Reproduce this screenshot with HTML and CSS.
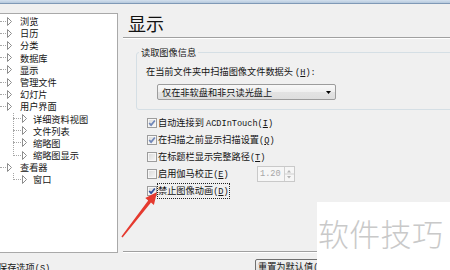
FILE: index.html
```html
<!DOCTYPE html>
<html>
<head>
	<meta charset="utf-8">
	<title>选项 - 显示</title>
	<link rel="stylesheet" href="styles.css">
</head>
<body>

	<svg class="defs">
		<symbol id="tri" viewBox="0 0 7 9"><path d="M1.5 0.5 L5.5 4.5 L1.5 8.5 Z" fill="#fff" stroke="#8c8c8c"/></symbol>
		<symbol id="tick" viewBox="0 0 8 8"><path d="M1.2 4 L3.1 6.1 L6.9 1.5" fill="none" stroke-width="1.7"/></symbol>
	</svg>

	<div class="frame-top"></div>

	<div class="dialog">
		<div class="tree">
			<div class="node"><i class="twig"></i><svg class="tri"><use href="#tri"/></svg><span>浏览</span></div>
			<div class="node"><i class="twig"></i><svg class="tri"><use href="#tri"/></svg><span>日历</span></div>
			<div class="node"><i class="twig"></i><svg class="tri"><use href="#tri"/></svg><span>分类</span></div>
			<div class="node"><i class="twig"></i><svg class="tri"><use href="#tri"/></svg><span>数据库</span></div>
			<div class="node"><i class="twig"></i><svg class="tri"><use href="#tri"/></svg><span class="sel">显示</span></div>
			<div class="node"><i class="twig"></i><svg class="tri"><use href="#tri"/></svg><span>管理文件</span></div>
			<div class="node"><i class="twig"></i><svg class="tri"><use href="#tri"/></svg><span>幻灯片</span></div>
			<div class="node"><i class="twig"></i><svg class="tri"><use href="#tri"/></svg><span>用户界面</span></div>
			<div class="children">
				<div class="node"><i class="twig"></i><svg class="tri"><use href="#tri"/></svg><span>详细资料视图</span></div>
				<div class="node"><i class="twig"></i><svg class="tri"><use href="#tri"/></svg><span>文件列表</span></div>
				<div class="node"><i class="twig"></i><svg class="tri"><use href="#tri"/></svg><span>缩略图</span></div>
				<div class="node"><i class="twig"></i><svg class="tri"><use href="#tri"/></svg><span>缩略图显示</span></div>
			</div>
			<div class="node"><i class="twig"></i><svg class="tri"><use href="#tri"/></svg><span>查看器</span></div>
			<div class="children">
				<div class="node"><i class="twig"></i><svg class="tri"><use href="#tri"/></svg><span>窗口</span></div>
			</div>
		</div>

		<div class="page">
			<h1 class="page-title">显示</h1>
			<div class="rule"></div>

			<fieldset class="group">
				<legend>读取图像信息</legend>
				<p class="group-label">在当前文件夹中扫描图像文件数据头 <span class="key">(<u>H</u>):</span></p>
				<div class="combo">
					<span>仅在非软盘和非只读光盘上</span>
					<svg class="combo-arrow" viewBox="0 0 5 3"><path d="M0 0 H5 L2.5 3 Z"/></svg>
				</div>
			</fieldset>

			<ul class="options">
				<li class="opt"><span class="cb"><svg class="tick"><use href="#tick"/></svg></span><span class="opt-text">自动连接到 <span class="key">ACDInTouch(<u>I</u>)</span></span></li>
				<li class="opt"><span class="cb"><svg class="tick"><use href="#tick"/></svg></span><span class="opt-text">在扫描之前显示扫描设置<span class="key">(<u>Q</u>)</span></span></li>
				<li class="opt"><span class="cb"></span><span class="opt-text">在标题栏显示完整路径<span class="key">(<u>T</u>)</span></span></li>
				<li class="opt">
					<span class="cb"></span><span class="opt-text gamma">启用伽马校正<span class="key">(<u>E</u>)</span></span>
					<span class="spin">
						<span class="spin-value">1.20</span>
						<svg class="spin-btns" viewBox="0 0 10 14"><path d="M0.5 0 V14 M0.5 7 H10" stroke="#d0d0d0" fill="none"/><path d="M5 3 L7 5.5 H3 Z M5 11.5 L7 9 H3 Z" fill="#b4b4b4"/></svg>
					</span>
				</li>
				<li class="opt"><span class="cb"><svg class="tick strong"><use href="#tick"/></svg></span><span class="opt-text focus">禁止图像动画<span class="key">(<u>D</u>)</span></span></li>
			</ul>

			<div class="rule rule-bottom"></div>
		</div>
	</div>

	<div class="footer">
		<span class="save">保存选项<span class="key">(<u>S</u>)</span></span>
		<button class="reset" type="button">重置为默认值<span class="key">(<u>D</u>)</span></button>
	</div>

	<div class="watermark">软件技巧</div>

	<svg class="callout" viewBox="0 0 450 270">
		<polygon points="121.4,236.5 148.2,200.4 145.3,198.1 157,192 153.9,204.9 151,202.6 122.6,237.5" fill="#e53a2f"/>
	</svg>

</body>
</html>
```

FILE: styles.css
```css
html, body { margin: 0; }
body {
	position: relative;
	width: 450px;
	height: 270px;
	overflow: hidden;
	background: #f0f0f0;
	font-family: "Noto Sans CJK SC", sans-serif;
	font-size: 9.2px;
	color: #141414;
}

.defs { display: none; }

.frame-top {
	height: 3px;
	background: linear-gradient(#d3e0ee, #b6c9dd);
	border-bottom: 1px solid #7f99b6;
}

.dialog { display: flex; padding-top: 9px; height: 240px; }

/* tree on the left */
.tree {
	flex: none;
	box-sizing: border-box;
	width: 119px;
	height: 240px;
	margin-left: -1px;
	padding-top: 1px;
	background: #fff;
	border: 1px solid #a9a9a9;
}
.node { display: flex; align-items: center; height: 12.2px; line-height: 12.2px; white-space: nowrap; }
.twig { flex: none; width: 6px; border-top: 1px dotted #a6a6a6; }
.tri { flex: none; width: 7px; height: 9px; margin-right: 7px; }
.sel { background: #ececec; line-height: 10px; }

.children {
	margin-left: 13px;
	background-image: repeating-linear-gradient(#a6a6a6 0 1px, transparent 1px 2px);
	background-size: 1px calc(100% - 6px);
	background-repeat: no-repeat;
}
.children .twig { width: 8px; }
.children .tri { margin-right: 5px; }

/* right page */
.page { flex: 1; display: flex; flex-direction: column; min-width: 0; padding-left: 5px; }
.page-title { margin: 0 0 4px 5px; font-size: 18px; line-height: 20px; font-weight: normal; color: #111; }
.rule { border-top: 1px solid #a0a0a0; border-bottom: 1px solid #fff; }
.rule-bottom { margin-top: auto; }

.group {
	margin: 7px -20px 0 13px;
	padding: 6.5px 0 9px 9px;
	min-width: 0;
	border: 1px solid #d5dfe5;
	border-radius: 3px;
}
.group legend { margin-left: -7px; padding: 0 2px; line-height: 12px; }
.group-label { margin: 0; line-height: 12px; }

.key { font-family: "Liberation Mono", monospace; font-size: 8.6px; }

.combo {
	display: flex;
	align-items: center;
	justify-content: space-between;
	box-sizing: border-box;
	width: 179px;
	height: 16px;
	margin: 5.5px 0 0 11px;
	padding: 0 4px;
	border: 1px solid #9c9c9c;
	border-radius: 2px;
	background: linear-gradient(#f8f8f8, #efefef 50%, #e3e3e3 51%, #dedede);
	line-height: 12px;
}
.combo-arrow { width: 5px; height: 3px; }

.options { list-style: none; margin: 4px 0 0 24px; padding: 0; }
.opt { display: flex; align-items: center; height: 17.2px; line-height: 12px; white-space: nowrap; }
.cb {
	flex: none;
	display: flex;
	align-items: center;
	justify-content: center;
	box-sizing: border-box;
	width: 10px;
	height: 10px;
	margin-right: 1px;
	border: 1px solid #9c9c9c;
	background: linear-gradient(135deg, #d9d9d9, #f7f7f7);
	box-shadow: inset 0 0 0 1px #f6f6f6;
}
.tick { width: 8px; height: 8px; stroke: #6f86b8; }
.tick.strong { stroke: #2d4f9e; }
.gamma { width: 99px; }
.focus { outline: 1px dotted #222; }

.spin {
	display: flex;
	box-sizing: border-box;
	width: 38px;
	height: 16px;
	border: 1px solid #c9c9c9;
	background: #f6f6f6;
	color: #a6a6a6;
	font-family: "Liberation Mono", monospace;
	font-size: 8.6px;
	line-height: 14px;
}
.spin-value { flex: 1; padding-left: 2px; }
.spin-btns { width: 10px; height: 14px; }

.footer { display: grid; grid-template-columns: 255px auto; align-items: start; height: 17px; }
.save { margin: 7.5px 0 0 -2px; line-height: 12px; white-space: nowrap; }
.reset {
	box-sizing: border-box;
	width: 100px;
	height: 16px;
	margin-top: 6px;
	padding: 0 0 0 2px;
	border: 1px solid #707070;
	border-radius: 2px;
	background: linear-gradient(#f2f2f2, #dcdcdc);
	font: inherit;
	line-height: 12px;
	color: #141414;
	text-align: left;
	white-space: nowrap;
}

/* overlays from the screenshot: watermark and red callout arrow */
.watermark {
	position: absolute;
	left: 317px;
	top: 202px;
	width: 133px;
	height: 68px;
	box-sizing: border-box;
	padding: 15px 0 0 1px;
	background: #fff;
	color: #c9c9c9;
	font-size: 31px;
	font-weight: 300;
	line-height: 31px;
	letter-spacing: 0.3px;
	white-space: nowrap;
}
.callout { position: absolute; left: 0; top: 0; width: 450px; height: 270px; pointer-events: none; }
```
